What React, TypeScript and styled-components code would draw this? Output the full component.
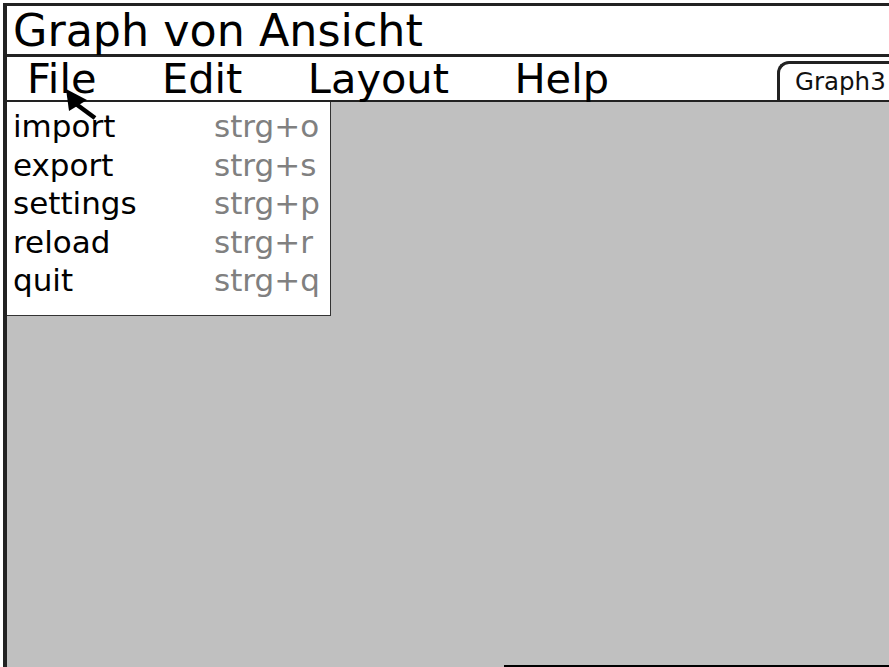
import React from "react";
import styled, { createGlobalStyle } from "styled-components";

const Global = createGlobalStyle`
  html, body { margin: 0; padding: 0; background: #ffffff; }
  body { font-family: "DejaVu Sans", "Liberation Sans", sans-serif; }
  #root { width: 889px; height: 667px; overflow: hidden; }
`;

const Frame = styled.div`
  position: relative;
  margin: 3px 0 0 3px;
  height: 664px;
  border-top: 3px solid #222;
  border-left: 4px solid #222;
  box-sizing: border-box;
  display: flex;
  flex-direction: column;
  overflow: hidden;
  background: #fff;
`;

const TitleBar = styled.div`
  height: 51px;
  line-height: 48px;
  padding-left: 6px;
  padding-top: 1px;
  box-sizing: border-box;
  font-size: 44.4px;
  color: #000;
  border-bottom: 3px solid #222;
  flex: none;
  white-space: nowrap;
`;

const MenuBar = styled.div`
  height: 45px;
  box-sizing: border-box;
  border-bottom: 2px solid #222;
  display: flex;
  align-items: flex-end;
  padding-left: 20px;
  gap: 65.5px;
  flex: none;
  position: relative;
`;

const MenuItem = styled.div`
  font-size: 41.5px;
  line-height: 43px;
  height: 43px;
  color: #000;
  white-space: nowrap;
`;

const Tab = styled.div`
  margin-left: auto;
  margin-right: -30px;
  width: 142px;
  height: 39px;
  box-sizing: border-box;
  border-top: 3px solid #222;
  border-left: 3px solid #222;
  border-top-left-radius: 12px;
  background: #fff;
  font-size: 24.5px;
  line-height: 36px;
  padding-left: 15px;
  color: #111;
  white-space: nowrap;
`;

const Canvas = styled.div`
  position: relative;
  flex: 1;
  background: #c0c0c0;
  display: flex;
  flex-direction: column;
  justify-content: flex-end;
  align-items: flex-end;
`;

const BottomEdge = styled.div`
  width: 385px;
  height: 2px;
  background: #000;
`;

const Dropdown = styled.div`
  position: absolute;
  left: 0;
  top: 0;
  width: 324px;
  height: 214px;
  box-sizing: border-box;
  background: #fff;
  border: 1px solid #333;
  border-left: none;
  border-top: none;
  padding: 5px 0 0 6px;
  display: grid;
  grid-template-columns: 201px auto;
  grid-auto-rows: 38.5px;
  align-content: start;
  font-size: 31px;
  line-height: 38.5px;
`;

const Label = styled.span`
  color: #000;
  white-space: nowrap;
`;

const Shortcut = styled.span`
  color: #808080;
  white-space: nowrap;
`;

const Cursor = styled.svg`
  position: absolute;
  pointer-events: none;
`;

const items: [string, string][] = [
  ["import", "strg+o"],
  ["export", "strg+s"],
  ["settings", "strg+p"],
  ["reload", "strg+r"],
  ["quit", "strg+q"],
];

export default function App() {
  return (
    <>
      <Global />
      <Frame>
        <TitleBar>Graph von Ansicht</TitleBar>
        <MenuBar>
          <MenuItem>File</MenuItem>
          <MenuItem>Edit</MenuItem>
          <MenuItem>Layout</MenuItem>
          <MenuItem>Help</MenuItem>
          <Tab>Graph3</Tab>
        </MenuBar>
        <Canvas>
          <Dropdown>
            {items.map(([l, s]) => (
              <React.Fragment key={l}>
                <Label>{l}</Label>
                <Shortcut>{s}</Shortcut>
              </React.Fragment>
            ))}
          </Dropdown>
          <BottomEdge />
        </Canvas>
        <Cursor width="120" height="130" viewBox="0 0 120 130" style={{ left: -7, top: -6 }}>
          <polygon points="66,89 69,111 87,100" fill="#000" />
          <line x1="76" y1="104" x2="95" y2="118" stroke="#000" strokeWidth="4.5" />
        </Cursor>
      </Frame>
    </>
  );
}
